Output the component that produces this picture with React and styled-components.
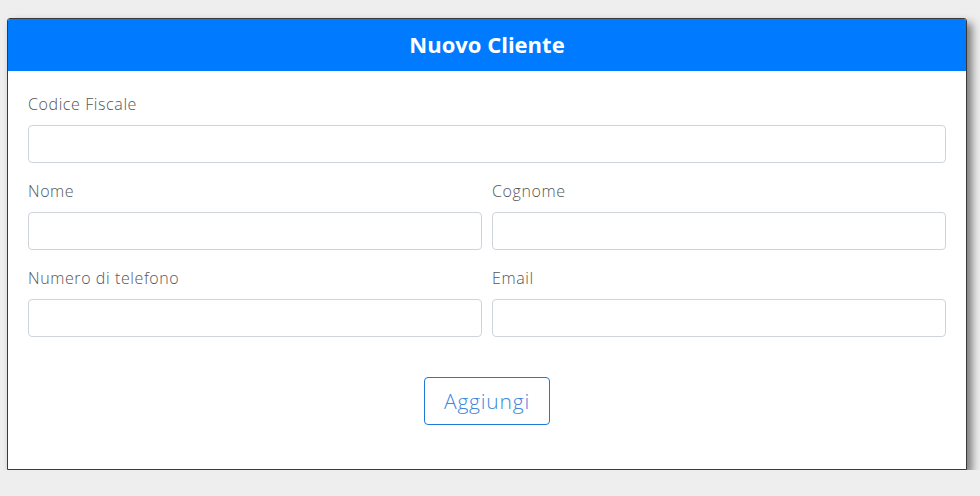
import React from "react";
import styled, { createGlobalStyle } from "styled-components";

const Global = createGlobalStyle`
  body {
    margin: 0;
    background: #eeeeee;
    font-family: "Open Sans", "Noto Sans", sans-serif;
  }
`;

const NuovoCliente = () => {
  return (
    <Page>
      <Global />
      <Card>
        <Header>Nuovo Cliente</Header>
        <Body>
          <Group>
            <Label>Codice Fiscale</Label>
            <Input type="text" />
          </Group>
          <Row>
            <Group>
              <Label>Nome</Label>
              <Input type="text" />
            </Group>
            <Group>
              <Label>Cognome</Label>
              <Input type="text" />
            </Group>
          </Row>
          <Row>
            <Group>
              <Label>Numero di telefono</Label>
              <Input type="text" />
            </Group>
            <Group>
              <Label>Email</Label>
              <Input type="email" />
            </Group>
          </Row>
          <Actions>
            <OutlineButton>Aggiungi</OutlineButton>
          </Actions>
        </Body>
      </Card>
    </Page>
  );
};

const Page = styled.div`
  padding: 18px 0 0 7px;
`;

const Card = styled.div`
  width: 958px;
  background: #fff;
  border: 1px solid #3a3a3a;
  border-radius: 3px 3px 0 0;
  box-shadow: 5px 5px 8px rgba(0, 0, 0, 0.5);
  overflow: hidden;
`;

const Header = styled.div`
  height: 52px;
  background: #007bff;
  color: #fff;
  font-family: "Open Sans", "Noto Sans", sans-serif;
  font-weight: 700;
  font-size: 22px;
  padding-bottom: 3px;
  box-sizing: border-box;
  display: flex;
  align-items: center;
  justify-content: center;
`;

const Body = styled.div`
  padding: 21px 20px 21px;
`;

const Row = styled.div`
  display: grid;
  grid-template-columns: 1fr 1fr;
  gap: 10px;
`;

const Group = styled.div`
  display: flex;
  flex-direction: column;
  margin-bottom: 16px;
`;

const Label = styled.label`
  font-size: 16px;
  font-weight: 300;
  line-height: 24px;
  letter-spacing: 0.6px;
  color: #555;
  margin-bottom: 9px;
`;

const Input = styled.input`
  box-sizing: border-box;
  height: 38px;
  width: 100%;
  border: 1px solid #ced4da;
  border-radius: 4px;
  background: #fff;
  padding: 6px 12px;
  font-size: 16px;
`;

const Actions = styled.div`
  display: flex;
  justify-content: center;
  padding: 24px 0 23px;
`;

const OutlineButton = styled.button`
  box-sizing: border-box;
  height: 48px;
  width: 126px;
  background: #fff;
  border: 1px solid #1f7ad6;
  border-radius: 4px;
  color: #3e87dc;
  font-family: "Open Sans", "Noto Sans", sans-serif;
  font-weight: 300;
  font-size: 21px;
  letter-spacing: 0.8px;
  cursor: pointer;
`;

export default NuovoCliente;
